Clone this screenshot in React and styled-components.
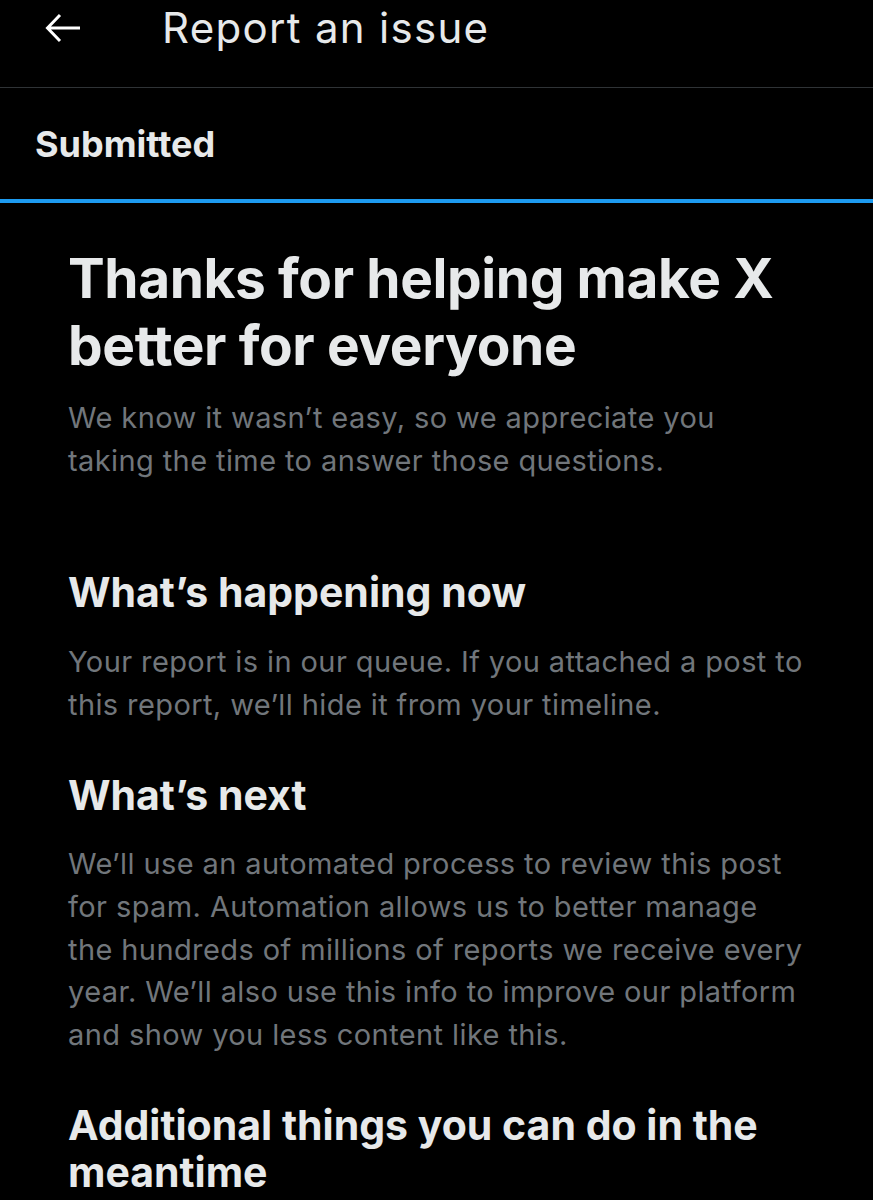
import React from 'react';
import styled, { createGlobalStyle } from 'styled-components';

const GlobalStyle = createGlobalStyle`
  html, body {
    margin: 0;
    padding: 0;
    background: #000;
  }
  body {
    font-family: Inter, Roboto, "Noto Sans", sans-serif;
    color: #e7e9ea;
  }
`;

const Page = styled.div`
  min-height: 1200px;
  background: #000;
`;

const TopBar = styled.header`
  display: flex;
  align-items: center;
  height: 88px;
  padding: 0 0 32px 45px;
  border-bottom: 1px solid #2f3336;
  box-sizing: border-box;
`;

const BackButton = styled.button`
  display: flex;
  align-items: center;
  justify-content: center;
  width: 36px;
  height: 36px;
  padding: 0;
  border: none;
  background: none;
  color: #fff;
  cursor: pointer;
`;

const Title = styled.h1`
  margin: 0 0 0 81px;
  font-size: 42px;
  font-weight: 400;
  letter-spacing: 1.3px;
  color: #e7e9ea;
`;

const Tabs = styled.nav`
  display: flex;
`;

const Tab = styled.div`
  flex: 1;
  display: flex;
  align-items: center;
  height: 115px;
  padding-left: 35px;
  box-sizing: border-box;
  font-size: 36px;
  font-weight: 700;
  color: #e7e9ea;
  border-bottom: 4px solid ${(p) => (p.$active ? '#1d9bf0' : 'transparent')};
`;

const Content = styled.main`
  padding: 42px 66px 0 68px;
`;

const Heading = styled.h2`
  margin: 0;
  font-size: ${(p) => p.$size}px;
  line-height: ${(p) => p.$lh}px;
  letter-spacing: ${(p) => p.$ls || 0}px;
  font-weight: 700;
  color: #e7e9ea;
`;

const Body = styled.p`
  margin: ${(p) => p.$mt || 0}px 0 0;
  font-size: 29px;
  line-height: 42.6px;
  letter-spacing: 0.4px;
  color: #71767b;
`;

const Section = styled.section`
  margin-top: ${(p) => p.$mt}px;
`;

const ArrowIcon = () => (
  <svg width="36" height="30" viewBox="0 0 36 30" fill="none" stroke="currentColor" strokeWidth="3">
    <path d="M35 15H3M15 2L2.5 15 15 28" />
  </svg>
);

export default function App() {
  return (
    <Page>
      <GlobalStyle />
      <TopBar>
        <BackButton aria-label="Back">
          <ArrowIcon />
        </BackButton>
        <Title>Report an issue</Title>
      </TopBar>
      <Tabs>
        <Tab $active>Submitted</Tab>
      </Tabs>
      <Content>
        <Heading $size={55} $lh={67} $ls={-0.4}>
          Thanks for helping make X better for everyone
        </Heading>
        <Body $mt={18}>
          We know it wasn’t easy, so we appreciate you taking the time to answer those questions.
        </Body>
        <Section $mt={86}>
          <Heading $size={41} $lh={48}>What’s happening now</Heading>
          <Body $mt={25}>
            Your report is in our queue. If you attached a post to this report, we’ll hide it from your timeline.
          </Body>
        </Section>
        <Section $mt={45}>
          <Heading $size={41} $lh={48}>What’s next</Heading>
          <Body $mt={24}>
            We’ll use an automated process to review this post for spam. Automation allows us to better manage the
            hundreds of millions of reports we receive every year. We’ll also use this info to improve our platform and
            show you less content like this.
          </Body>
        </Section>
        <Section $mt={46}>
          <Heading $size={41} $lh={47}>Additional things you can do in the meantime</Heading>
        </Section>
      </Content>
    </Page>
  );
}
